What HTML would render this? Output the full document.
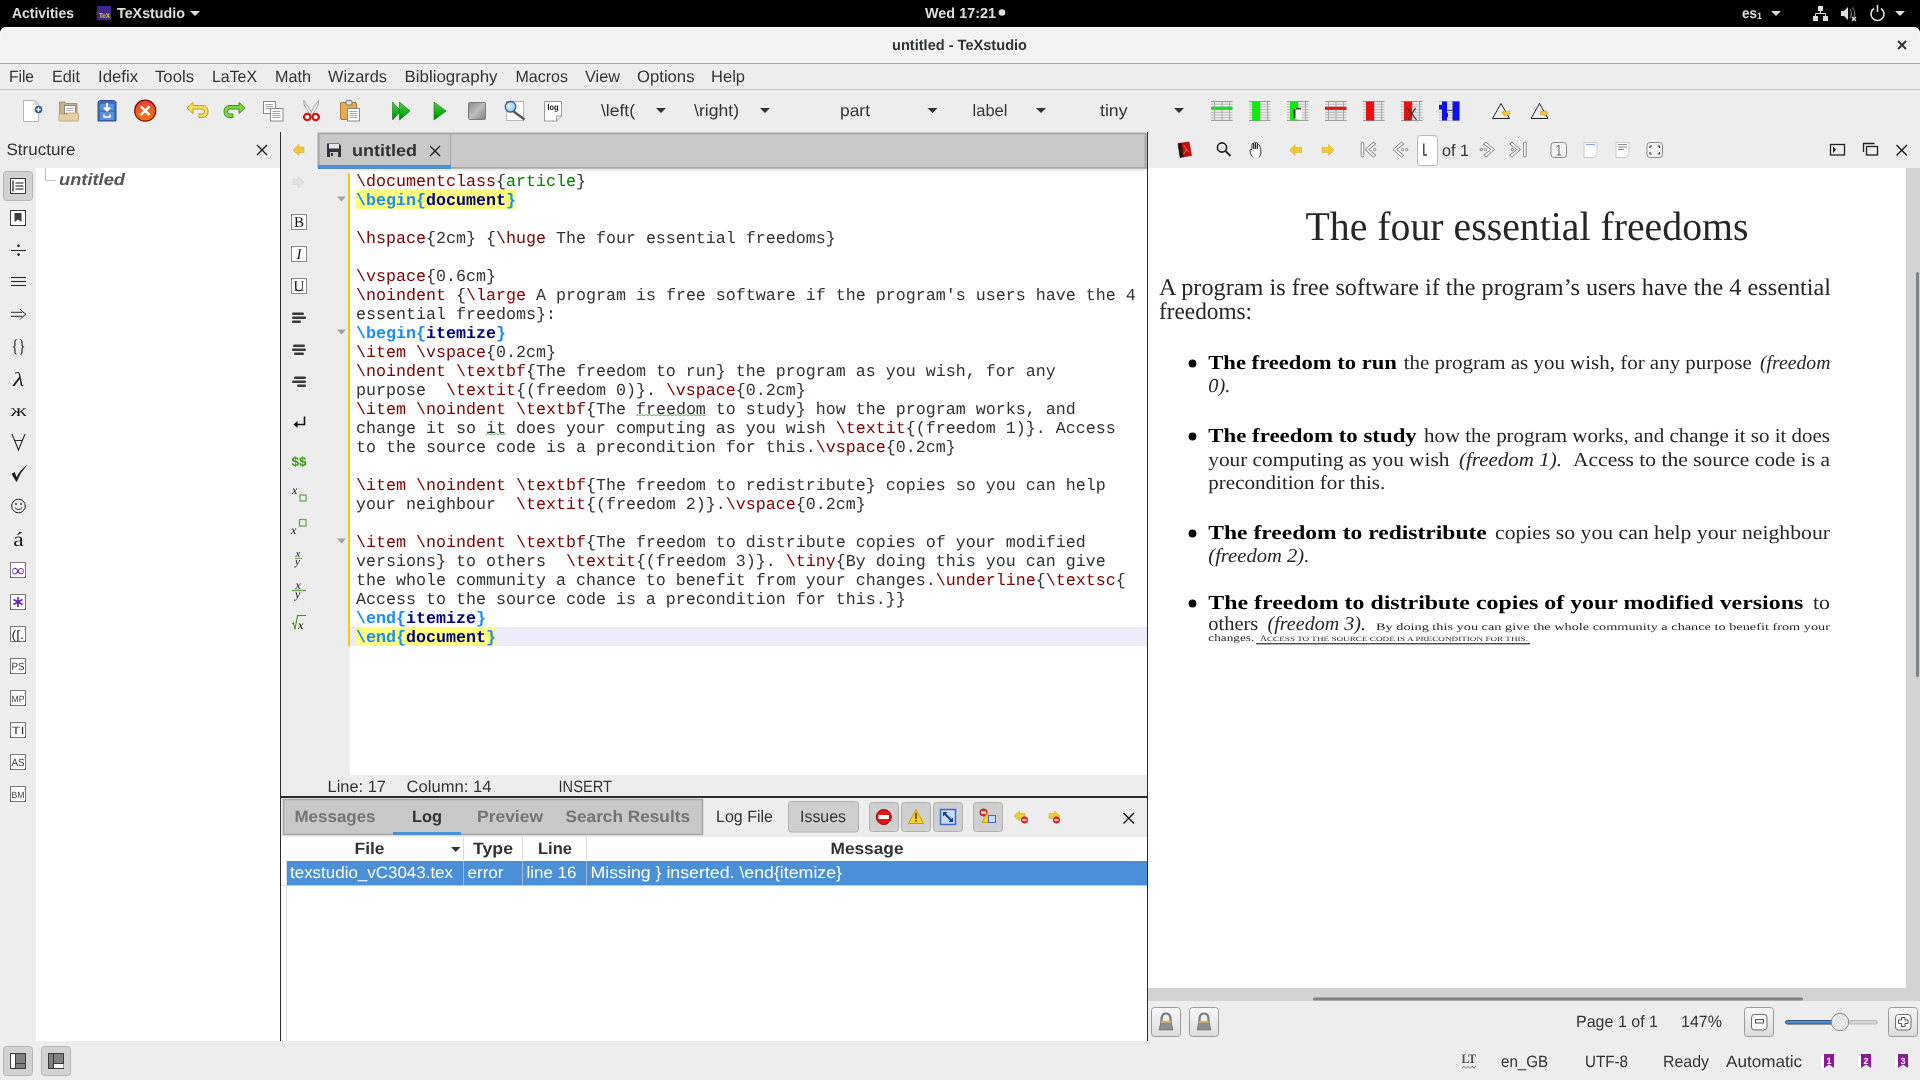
<!DOCTYPE html><html><head><meta charset="utf-8"><title>untitled - TeXstudio</title>
<style>html,body{margin:0;padding:0;width:1920px;height:1080px;overflow:hidden;background:#ededed;font-family:"Liberation Sans",sans-serif}svg{display:block;will-change:transform}</style></head><body>
<svg width="1920" height="1080" viewBox="0 0 1920 1080" text-rendering="geometricPrecision">
<rect x="0" y="0" width="1920" height="36" fill="#000000" />
<text x="12" y="18" font-family='"Liberation Sans", sans-serif' font-size="14.5" fill="#dedede" font-weight="bold" textLength="62" lengthAdjust="spacingAndGlyphs" >Activities</text>
<rect x="97" y="6" width="14" height="14" fill="#3b2a8c" rx="1" />
<text x="99" y="18" font-family='"Liberation Sans", sans-serif' font-size="7" fill="#f5d21f" font-weight="bold" textLength="11" lengthAdjust="spacingAndGlyphs" >TeX</text>
<text x="117" y="18" font-family='"Liberation Sans", sans-serif' font-size="14.5" fill="#dedede" font-weight="bold" textLength="68" lengthAdjust="spacingAndGlyphs" >TeXstudio</text>
<path d="M190 11 L200 11 L195 16 Z" fill="#dedede" />
<text x="925" y="18" font-family='"Liberation Sans", sans-serif' font-size="14.5" fill="#dedede" font-weight="bold" textLength="71" lengthAdjust="spacingAndGlyphs" >Wed 17:21</text>
<circle cx="1002" cy="12.5" r="3.3" fill="#dedede"/>
<text x="1742" y="18" font-family='"Liberation Sans", sans-serif' font-size="14.5" fill="#dedede" font-weight="bold" textLength="15" lengthAdjust="spacingAndGlyphs" >es</text>
<text x="1757" y="18.5" font-family='"Liberation Sans", sans-serif' font-size="9" fill="#dedede" font-weight="bold" textLength="5" lengthAdjust="spacingAndGlyphs" >1</text>
<path d="M1771 11 L1781 11 L1776 16 Z" fill="#dedede" />
<rect x="1818" y="6" width="5" height="5" fill="#dedede" />
<rect x="1813" y="16" width="5" height="5" fill="#dedede" />
<rect x="1823" y="16" width="5" height="5" fill="#dedede" />
<path d="M1820.5 11 V13.5 M1815.5 16 V13.5 H1825.5 V16" fill="none" stroke="#dedede" stroke-width="1" />
<path d="M1841 11 H1844 L1848 7 V20 L1844 16 H1841 Z" fill="#dedede" />
<path d="M1850 9 Q1853 13.5 1850 18 M1852.5 7.5 Q1857 13.5 1852.5 19.5" fill="none" stroke="#6a6a6a" stroke-width="1.2" />
<path d="M1852 17 L1856 21 M1856 17 L1852 21" fill="none" stroke="#dedede" stroke-width="1.4" />
<path d="M1874 8.5 A6.5 6.5 0 1 0 1881 8.5" fill="none" stroke="#dedede" stroke-width="1.6" />
<line x1="1877.5" y1="5" x2="1877.5" y2="12" stroke="#dedede" stroke-width="1.6" />
<path d="M1895 11 L1905 11 L1900 16 Z" fill="#dedede" />
<path d="M0 34 Q0 27 7 27 H1913 Q1920 27 1920 34 V63 H0 Z" fill="#f3f3f3" />
<path d="M0.5 34 Q0.5 27.5 7 27.5 H1913 Q1919.5 27.5 1919.5 34" fill="none" stroke="#ffffff" stroke-width="1" />
<text x="892" y="50" font-family='"Liberation Sans", sans-serif' font-size="14.8" fill="#2e3436" font-weight="bold" textLength="135" lengthAdjust="spacingAndGlyphs" >untitled - TeXstudio</text>
<path d="M1898 41 L1906 49 M1906 41 L1898 49" fill="none" stroke="#2e3436" stroke-width="2" />
<rect x="0" y="63" width="1920" height="1" fill="#a8a8a8" />
<rect x="0" y="64" width="1920" height="25" fill="#ededed" />
<text x="9" y="82" font-family='"Liberation Sans", sans-serif' font-size="16.5" fill="#2e3436" textLength="25" lengthAdjust="spacingAndGlyphs" >File</text>
<text x="52" y="82" font-family='"Liberation Sans", sans-serif' font-size="16.5" fill="#2e3436" textLength="28" lengthAdjust="spacingAndGlyphs" >Edit</text>
<text x="98" y="82" font-family='"Liberation Sans", sans-serif' font-size="16.5" fill="#2e3436" textLength="40" lengthAdjust="spacingAndGlyphs" >Idefix</text>
<text x="155" y="82" font-family='"Liberation Sans", sans-serif' font-size="16.5" fill="#2e3436" textLength="39" lengthAdjust="spacingAndGlyphs" >Tools</text>
<text x="212" y="82" font-family='"Liberation Sans", sans-serif' font-size="16.5" fill="#2e3436" textLength="45" lengthAdjust="spacingAndGlyphs" >LaTeX</text>
<text x="275" y="82" font-family='"Liberation Sans", sans-serif' font-size="16.5" fill="#2e3436" textLength="36" lengthAdjust="spacingAndGlyphs" >Math</text>
<text x="328" y="82" font-family='"Liberation Sans", sans-serif' font-size="16.5" fill="#2e3436" textLength="59" lengthAdjust="spacingAndGlyphs" >Wizards</text>
<text x="404.5" y="82" font-family='"Liberation Sans", sans-serif' font-size="16.5" fill="#2e3436" textLength="93" lengthAdjust="spacingAndGlyphs" >Bibliography</text>
<text x="515.5" y="82" font-family='"Liberation Sans", sans-serif' font-size="16.5" fill="#2e3436" textLength="52.5" lengthAdjust="spacingAndGlyphs" >Macros</text>
<text x="585" y="82" font-family='"Liberation Sans", sans-serif' font-size="16.5" fill="#2e3436" textLength="35" lengthAdjust="spacingAndGlyphs" >View</text>
<text x="637" y="82" font-family='"Liberation Sans", sans-serif' font-size="16.5" fill="#2e3436" textLength="57.5" lengthAdjust="spacingAndGlyphs" >Options</text>
<text x="711" y="82" font-family='"Liberation Sans", sans-serif' font-size="16.5" fill="#2e3436" textLength="34" lengthAdjust="spacingAndGlyphs" >Help</text>
<rect x="0" y="89" width="1920" height="1" fill="#c4c4c4" />
<rect x="0" y="90" width="1920" height="42" fill="#ededed" />
<text x="601" y="116" font-family='"Liberation Sans", sans-serif' font-size="16.5" fill="#2e3436" textLength="34" lengthAdjust="spacingAndGlyphs" >\left(</text>
<path d="M656 108 L666 108 L661.0 113 Z" fill="#2e3436" />
<text x="694" y="116" font-family='"Liberation Sans", sans-serif' font-size="16.5" fill="#2e3436" textLength="45" lengthAdjust="spacingAndGlyphs" >\right)</text>
<path d="M760 108 L770 108 L765.0 113 Z" fill="#2e3436" />
<text x="840" y="116" font-family='"Liberation Sans", sans-serif' font-size="16.5" fill="#2e3436" textLength="30" lengthAdjust="spacingAndGlyphs" >part</text>
<path d="M927.5 108 L937.5 108 L932.5 113 Z" fill="#2e3436" />
<text x="972.5" y="116" font-family='"Liberation Sans", sans-serif' font-size="16.5" fill="#2e3436" textLength="35" lengthAdjust="spacingAndGlyphs" >label</text>
<path d="M1036 108 L1046 108 L1041.0 113 Z" fill="#2e3436" />
<text x="1100" y="116" font-family='"Liberation Sans", sans-serif' font-size="16.5" fill="#2e3436" textLength="27.5" lengthAdjust="spacingAndGlyphs" >tiny</text>
<path d="M1174 108 L1184 108 L1179.0 113 Z" fill="#2e3436" />
<rect x="0" y="132" width="280" height="36" fill="#ededed" />
<text x="6.5" y="155" font-family='"Liberation Sans", sans-serif' font-size="16.5" fill="#2e3436" textLength="69" lengthAdjust="spacingAndGlyphs" >Structure</text>
<path d="M257 145 L267 155 M267 145 L257 155" fill="none" stroke="#1a1a1a" stroke-width="1.4" />
<rect x="36" y="168" width="244" height="873" fill="#ffffff" />
<path d="M45.5 168 V180.5 H56" fill="none" stroke="#c0c0c0" stroke-width="1" />
<text x="59" y="185" font-family='"Liberation Sans", sans-serif' font-size="16.5" fill="#555753" font-weight="bold" font-style="italic" textLength="66" lengthAdjust="spacingAndGlyphs" >untitled</text>
<rect x="3.5" y="171.5" width="29" height="29" fill="#d2d2d2" stroke="#b6b6b6" stroke-width="1" rx="3" />
<rect x="280" y="132" width="1" height="909" fill="#2b2b2b" />
<rect x="1147" y="132" width="1" height="909" fill="#2b2b2b" />
<rect x="281" y="132" width="866" height="643" fill="#ededed" />
<rect x="318" y="133" width="829" height="36" fill="#c8c8c8" />
<path d="M318.5 168 V133.5 H1145.5 V168" fill="none" stroke="#a6a6a6" stroke-width="2" />
<line x1="450.5" y1="135" x2="450.5" y2="165" stroke="#a6a6a6" stroke-width="1" />
<rect x="318" y="165" width="133" height="4" fill="#4a90d9" />
<rect x="451" y="167" width="696" height="1.5" fill="#a6a6a6" />
<text x="352" y="156" font-family='"Liberation Sans", sans-serif' font-size="16.5" fill="#2e3436" font-weight="bold" textLength="65" lengthAdjust="spacingAndGlyphs" >untitled</text>
<path d="M430 146 L440 156 M440 146 L430 156" fill="none" stroke="#1a1a1a" stroke-width="1.4" />
<rect x="350" y="171" width="797" height="604" fill="#ffffff" />
<rect x="348" y="173" width="2" height="473" fill="#f8c800" />
<rect x="350" y="627" width="797" height="19" fill="#ececfb" />
<rect x="356" y="190" width="160" height="19" fill="#ffff80" />
<rect x="356" y="627" width="140" height="19" fill="#ffff80" />
<text x="356" y="186" font-family='"Liberation Mono", monospace' font-size="16.67" fill="#2e3436" style="white-space:pre"><tspan fill="#800000">\documentclass</tspan><tspan>{</tspan><tspan fill="#008000">article</tspan><tspan>}</tspan></text>
<text x="356" y="205" font-family='"Liberation Mono", monospace' font-size="16.67" fill="#2e3436" style="white-space:pre"><tspan fill="#1a8ef5" font-weight="bold">\begin{</tspan><tspan fill="#000080" font-weight="bold">document</tspan><tspan fill="#1a8ef5" font-weight="bold">}</tspan></text>
<text x="356" y="243" font-family='"Liberation Mono", monospace' font-size="16.67" fill="#2e3436" style="white-space:pre"><tspan fill="#800000">\hspace</tspan><tspan>{2cm} {</tspan><tspan fill="#800000">\huge</tspan><tspan> The four essential freedoms}</tspan></text>
<text x="356" y="281" font-family='"Liberation Mono", monospace' font-size="16.67" fill="#2e3436" style="white-space:pre"><tspan fill="#800000">\vspace</tspan><tspan>{0.6cm}</tspan></text>
<text x="356" y="300" font-family='"Liberation Mono", monospace' font-size="16.67" fill="#2e3436" style="white-space:pre"><tspan fill="#800000">\noindent</tspan><tspan> {</tspan><tspan fill="#800000">\large</tspan><tspan> A program is free software if the program's users have the 4</tspan></text>
<text x="356" y="319" font-family='"Liberation Mono", monospace' font-size="16.67" fill="#2e3436" style="white-space:pre"><tspan>essential freedoms}:</tspan></text>
<text x="356" y="338" font-family='"Liberation Mono", monospace' font-size="16.67" fill="#2e3436" style="white-space:pre"><tspan fill="#1a8ef5" font-weight="bold">\begin{</tspan><tspan fill="#000080" font-weight="bold">itemize</tspan><tspan fill="#1a8ef5" font-weight="bold">}</tspan></text>
<text x="356" y="357" font-family='"Liberation Mono", monospace' font-size="16.67" fill="#2e3436" style="white-space:pre"><tspan fill="#800000">\item</tspan><tspan> </tspan><tspan fill="#800000">\vspace</tspan><tspan>{0.2cm}</tspan></text>
<text x="356" y="376" font-family='"Liberation Mono", monospace' font-size="16.67" fill="#2e3436" style="white-space:pre"><tspan fill="#800000">\noindent</tspan><tspan> </tspan><tspan fill="#800000">\textbf</tspan><tspan>{The freedom to run} the program as you wish, for any</tspan></text>
<text x="356" y="395" font-family='"Liberation Mono", monospace' font-size="16.67" fill="#2e3436" style="white-space:pre"><tspan>purpose  </tspan><tspan fill="#800000">\textit</tspan><tspan>{(freedom 0)}. </tspan><tspan fill="#800000">\vspace</tspan><tspan>{0.2cm}</tspan></text>
<text x="356" y="414" font-family='"Liberation Mono", monospace' font-size="16.67" fill="#2e3436" style="white-space:pre"><tspan fill="#800000">\item</tspan><tspan> </tspan><tspan fill="#800000">\noindent</tspan><tspan> </tspan><tspan fill="#800000">\textbf</tspan><tspan>{The freedom to study} how the program works, and</tspan></text>
<text x="356" y="433" font-family='"Liberation Mono", monospace' font-size="16.67" fill="#2e3436" style="white-space:pre"><tspan>change it so it does your computing as you wish </tspan><tspan fill="#800000">\textit</tspan><tspan>{(freedom 1)}. Access</tspan></text>
<text x="356" y="452" font-family='"Liberation Mono", monospace' font-size="16.67" fill="#2e3436" style="white-space:pre"><tspan>to the source code is a precondition for this.</tspan><tspan fill="#800000">\vspace</tspan><tspan>{0.2cm}</tspan></text>
<text x="356" y="490" font-family='"Liberation Mono", monospace' font-size="16.67" fill="#2e3436" style="white-space:pre"><tspan fill="#800000">\item</tspan><tspan> </tspan><tspan fill="#800000">\noindent</tspan><tspan> </tspan><tspan fill="#800000">\textbf</tspan><tspan>{The freedom to redistribute} copies so you can help</tspan></text>
<text x="356" y="509" font-family='"Liberation Mono", monospace' font-size="16.67" fill="#2e3436" style="white-space:pre"><tspan>your neighbour  </tspan><tspan fill="#800000">\textit</tspan><tspan>{(freedom 2)}.</tspan><tspan fill="#800000">\vspace</tspan><tspan>{0.2cm}</tspan></text>
<text x="356" y="547" font-family='"Liberation Mono", monospace' font-size="16.67" fill="#2e3436" style="white-space:pre"><tspan fill="#800000">\item</tspan><tspan> </tspan><tspan fill="#800000">\noindent</tspan><tspan> </tspan><tspan fill="#800000">\textbf</tspan><tspan>{The freedom to distribute copies of your modified</tspan></text>
<text x="356" y="566" font-family='"Liberation Mono", monospace' font-size="16.67" fill="#2e3436" style="white-space:pre"><tspan>versions} to others  </tspan><tspan fill="#800000">\textit</tspan><tspan>{(freedom 3)}. </tspan><tspan fill="#800000">\tiny</tspan><tspan>{By doing this you can give</tspan></text>
<text x="356" y="585" font-family='"Liberation Mono", monospace' font-size="16.67" fill="#2e3436" style="white-space:pre"><tspan>the whole community a chance to benefit from your changes.</tspan><tspan fill="#800000">\underline</tspan><tspan>{</tspan><tspan fill="#800000">\textsc</tspan><tspan>{</tspan></text>
<text x="356" y="604" font-family='"Liberation Mono", monospace' font-size="16.67" fill="#2e3436" style="white-space:pre"><tspan>Access to the source code is a precondition for this.}}</tspan></text>
<text x="356" y="623" font-family='"Liberation Mono", monospace' font-size="16.67" fill="#2e3436" style="white-space:pre"><tspan fill="#1a8ef5" font-weight="bold">\end{</tspan><tspan fill="#000080" font-weight="bold">itemize</tspan><tspan fill="#1a8ef5" font-weight="bold">}</tspan></text>
<text x="356" y="642" font-family='"Liberation Mono", monospace' font-size="16.67" fill="#2e3436" style="white-space:pre"><tspan fill="#1a8ef5" font-weight="bold">\end{</tspan><tspan fill="#000080" font-weight="bold">document</tspan><tspan fill="#1a8ef5" font-weight="bold">}</tspan></text>
<path d="M636 416 L638 414.5 L640 416 L642 414.5 L644 416 L646 414.5 L648 416 L650 414.5 L652 416 L654 414.5 L656 416 L658 414.5 L660 416 L662 414.5 L664 416 L666 414.5 L668 416 L670 414.5 L672 416 L674 414.5 L676 416 L678 414.5 L680 416 L682 414.5 L684 416 L686 414.5 L688 416 L690 414.5 L692 416 L694 414.5 L696 416 L698 414.5 L700 416 L702 414.5 L704 416 L706 414.5" fill="none" stroke="#3c9a3c" stroke-width="0.8" />
<path d="M486 435 L488 433.5 L490 435 L492 433.5 L494 435 L496 433.5 L498 435 L500 433.5 L502 435 L504 433.5 L506 435" fill="none" stroke="#3c9a3c" stroke-width="0.8" />
<path d="M337 196.5 L346 196.5 L341.5 201.5 Z" fill="#a0a0a0" />
<path d="M337 329.5 L346 329.5 L341.5 334.5 Z" fill="#a0a0a0" />
<path d="M337 538.5 L346 538.5 L341.5 543.5 Z" fill="#a0a0a0" />
<text x="327.5" y="792" font-family='"Liberation Sans", sans-serif' font-size="16.5" fill="#2e3436" textLength="58.5" lengthAdjust="spacingAndGlyphs" >Line: 17</text>
<text x="406.5" y="792" font-family='"Liberation Sans", sans-serif' font-size="16.5" fill="#2e3436" textLength="85" lengthAdjust="spacingAndGlyphs" >Column: 14</text>
<text x="558.5" y="792" font-family='"Liberation Sans", sans-serif' font-size="16.5" fill="#2e3436" textLength="53.5" lengthAdjust="spacingAndGlyphs" >INSERT</text>
<rect x="281" y="796" width="866" height="2" fill="#2b2b2b" />
<rect x="281" y="798" width="866" height="243" fill="#ededed" />
<rect x="283.5" y="799.5" width="419" height="35" fill="#c8c8c8" stroke="#a6a6a6" stroke-width="1.5" />
<text x="294.5" y="822" font-family='"Liberation Sans", sans-serif' font-size="16.5" fill="#6f7476" font-weight="bold" textLength="81" lengthAdjust="spacingAndGlyphs" >Messages</text>
<text x="412" y="822" font-family='"Liberation Sans", sans-serif' font-size="16.5" fill="#2e3436" font-weight="bold" textLength="30" lengthAdjust="spacingAndGlyphs" >Log</text>
<rect x="393" y="832" width="68" height="3" fill="#4a90d9" />
<text x="477" y="822" font-family='"Liberation Sans", sans-serif' font-size="16.5" fill="#6f7476" font-weight="bold" textLength="66" lengthAdjust="spacingAndGlyphs" >Preview</text>
<text x="565.5" y="822" font-family='"Liberation Sans", sans-serif' font-size="16.5" fill="#6f7476" font-weight="bold" textLength="124.5" lengthAdjust="spacingAndGlyphs" >Search Results</text>
<text x="716" y="822" font-family='"Liberation Sans", sans-serif' font-size="16.5" fill="#2e3436" textLength="57" lengthAdjust="spacingAndGlyphs" >Log File</text>
<rect x="788.5" y="801.5" width="70" height="30.5" fill="#cfcfcf" stroke="#b0b0b0" stroke-width="1" rx="3" />
<text x="800" y="822" font-family='"Liberation Sans", sans-serif' font-size="16.5" fill="#2e3436" textLength="46" lengthAdjust="spacingAndGlyphs" >Issues</text>
<rect x="869.5" y="802.5" width="29" height="29" fill="#cfcfcf" stroke="#b0b0b0" stroke-width="1" rx="3" />
<rect x="901.5" y="802.5" width="29" height="29" fill="#cfcfcf" stroke="#b0b0b0" stroke-width="1" rx="3" />
<rect x="933.5" y="802.5" width="29" height="29" fill="#cfcfcf" stroke="#b0b0b0" stroke-width="1" rx="3" />
<rect x="973.5" y="802.5" width="29" height="29" fill="#cfcfcf" stroke="#b0b0b0" stroke-width="1" rx="3" />
<path d="M1123.5 813 L1134 823.5 M1134 813 L1123.5 823.5" fill="none" stroke="#1a1a1a" stroke-width="1.4" />
<rect x="281" y="837" width="866" height="204" fill="#ffffff" />
<rect x="281" y="885" width="6" height="1" fill="#e0e0e0" />
<text x="354.5" y="854" font-family='"Liberation Sans", sans-serif' font-size="16.5" fill="#2e3436" font-weight="bold" textLength="30" lengthAdjust="spacingAndGlyphs" >File</text>
<path d="M451 847 L460.5 847 L455.75 852 Z" fill="#2e3436" />
<text x="473" y="854" font-family='"Liberation Sans", sans-serif' font-size="16.5" fill="#2e3436" font-weight="bold" textLength="40" lengthAdjust="spacingAndGlyphs" >Type</text>
<text x="538" y="854" font-family='"Liberation Sans", sans-serif' font-size="16.5" fill="#2e3436" font-weight="bold" textLength="34" lengthAdjust="spacingAndGlyphs" >Line</text>
<text x="830.5" y="854" font-family='"Liberation Sans", sans-serif' font-size="16.5" fill="#2e3436" font-weight="bold" textLength="73" lengthAdjust="spacingAndGlyphs" >Message</text>
<rect x="463" y="837" width="1" height="23" fill="#dcdcdc" />
<rect x="522" y="837" width="1" height="23" fill="#dcdcdc" />
<rect x="586" y="837" width="1" height="23" fill="#dcdcdc" />
<rect x="287" y="861" width="860" height="24" fill="#4a90d9" />
<rect x="463" y="861" width="1" height="24" fill="#a5b8cc" />
<rect x="522" y="861" width="1" height="24" fill="#a5b8cc" />
<rect x="586" y="861" width="1" height="24" fill="#a5b8cc" />
<rect x="287" y="885" width="860" height="1" fill="#c6c6c6" />
<rect x="286" y="861" width="1" height="180" fill="#dadada" />
<text x="290" y="877.5" font-family='"Liberation Sans", sans-serif' font-size="16.5" fill="#ffffff" textLength="163" lengthAdjust="spacingAndGlyphs" >texstudio_vC3043.tex</text>
<text x="467.5" y="877.5" font-family='"Liberation Sans", sans-serif' font-size="16.5" fill="#ffffff" textLength="36" lengthAdjust="spacingAndGlyphs" >error</text>
<text x="526.5" y="877.5" font-family='"Liberation Sans", sans-serif' font-size="16.5" fill="#ffffff" textLength="50" lengthAdjust="spacingAndGlyphs" >line 16</text>
<text x="590.5" y="877.5" font-family='"Liberation Sans", sans-serif' font-size="16.5" fill="#ffffff" textLength="251.5" lengthAdjust="spacingAndGlyphs" >Missing } inserted. \end{itemize}</text>
<rect x="1148" y="132" width="772" height="36" fill="#ededed" />
<rect x="1148" y="168" width="758" height="820" fill="#ffffff" />
<rect x="1906" y="168" width="14" height="833" fill="#d2d2d2" />
<rect x="1916" y="272" width="3" height="405" fill="#7e8284" rx="1.5" />
<rect x="1148" y="988" width="758" height="13" fill="#d2d2d2" />
<rect x="1313" y="997.5" width="490" height="3" fill="#7e8284" rx="1.5" />
<rect x="1148" y="1001" width="772" height="40" fill="#ededed" />
<rect x="1417.5" y="135.5" width="20" height="30" fill="#ffffff" stroke="#b8b8b8" stroke-width="1" rx="3" />
<path d="M1423.8 143.5 V155 H1427" fill="none" stroke="#2e3436" stroke-width="1.3" />
<text x="1442" y="156" font-family='"Liberation Sans", sans-serif' font-size="16.5" fill="#2e3436" textLength="27" lengthAdjust="spacingAndGlyphs" >of 1</text>
<path d="M1896.5 145 L1907 155.5 M1907 145 L1896.5 155.5" fill="none" stroke="#1a1a1a" stroke-width="1.4" />
<defs><linearGradient id="gb" x1="0" y1="0" x2="0" y2="1"><stop offset="0" stop-color="#f8f8f8"/><stop offset="1" stop-color="#dcdcdc"/></linearGradient></defs>
<rect x="1151.5" y="1007.5" width="29" height="29" fill="url(#gb)" stroke="#9a9a9a" stroke-width="1" rx="3" />
<defs><linearGradient id="gb" x1="0" y1="0" x2="0" y2="1"><stop offset="0" stop-color="#f8f8f8"/><stop offset="1" stop-color="#dcdcdc"/></linearGradient></defs>
<rect x="1189.5" y="1007.5" width="29" height="29" fill="url(#gb)" stroke="#9a9a9a" stroke-width="1" rx="3" />
<text x="1576" y="1027" font-family='"Liberation Sans", sans-serif' font-size="16.5" fill="#2e3436" textLength="82" lengthAdjust="spacingAndGlyphs" >Page 1 of 1</text>
<text x="1681" y="1027" font-family='"Liberation Sans", sans-serif' font-size="16.5" fill="#2e3436" textLength="41" lengthAdjust="spacingAndGlyphs" >147%</text>
<rect x="1744.5" y="1007.5" width="29" height="29" fill="url(#gb)" stroke="#9a9a9a" stroke-width="1" rx="3" />
<rect x="1888.5" y="1007.5" width="29" height="29" fill="url(#gb)" stroke="#9a9a9a" stroke-width="1" rx="3" />
<rect x="1785.5" y="1020.5" width="92" height="3.5" fill="#d4d4d4" stroke="#b0b0b0" stroke-width="0.8" rx="1.8" />
<rect x="1785.5" y="1020.5" width="55" height="3.5" fill="#4a90d9" stroke="#2a3a4a" stroke-width="0.8" rx="1.8" />
<circle cx="1840" cy="1022" r="8.7" fill="#e8e8e8" stroke="#8a8a8a" stroke-width="1"/>
<rect x="0" y="1041" width="1920" height="39" fill="#ededed" />
<rect x="3.5" y="1046.5" width="29" height="29" fill="#d2d2d2" stroke="#b6b6b6" stroke-width="1" rx="3" />
<rect x="41.5" y="1046.5" width="29" height="29" fill="#d2d2d2" stroke="#b6b6b6" stroke-width="1" rx="3" />
<text x="1461.5" y="1062.5" font-family='"Liberation Serif", serif' font-size="13" fill="#555555" font-weight="bold" textLength="14.5" lengthAdjust="spacingAndGlyphs" >LT</text>
<text x="1501" y="1067" font-family='"Liberation Sans", sans-serif' font-size="16.5" fill="#2e3436" textLength="47" lengthAdjust="spacingAndGlyphs" >en_GB</text>
<text x="1585" y="1067" font-family='"Liberation Sans", sans-serif' font-size="16.5" fill="#2e3436" textLength="43" lengthAdjust="spacingAndGlyphs" >UTF-8</text>
<text x="1663" y="1067" font-family='"Liberation Sans", sans-serif' font-size="16.5" fill="#2e3436" textLength="46" lengthAdjust="spacingAndGlyphs" >Ready</text>
<text x="1726" y="1067" font-family='"Liberation Sans", sans-serif' font-size="16.5" fill="#2e3436" textLength="76" lengthAdjust="spacingAndGlyphs" >Automatic</text>
<text x="1305.5" y="240" font-family='"Liberation Serif", serif' font-size="41" fill="#262626" textLength="443" lengthAdjust="spacingAndGlyphs" >The four essential freedoms</text>
<text x="1159" y="295.3" font-family='"Liberation Serif", serif' font-size="23.8" fill="#262626" textLength="672" lengthAdjust="spacingAndGlyphs" >A program is free software if the program’s users have the 4 essential</text>
<text x="1159" y="318.7" font-family='"Liberation Serif", serif' font-size="23.8" fill="#262626" textLength="93" lengthAdjust="spacingAndGlyphs" >freedoms:</text>
<circle cx="1192.5" cy="363.5" r="3.9" fill="#000000"/>
<text x="1208.3" y="369" font-family='"Liberation Serif", serif' font-size="19.8" fill="#000000" font-weight="bold" textLength="188.5" lengthAdjust="spacingAndGlyphs" >The freedom to run</text>
<text x="1403.7" y="369" font-family='"Liberation Serif", serif' font-size="19.8" fill="#262626" textLength="348" lengthAdjust="spacingAndGlyphs" >the program as you wish, for any purpose</text>
<text x="1760" y="369" font-family='"Liberation Serif", serif' font-size="19.8" fill="#262626" font-style="italic" textLength="70.5" lengthAdjust="spacingAndGlyphs" >(freedom</text>
<text x="1208.3" y="391.5" font-family='"Liberation Serif", serif' font-size="19.8" fill="#262626" font-style="italic" textLength="22" lengthAdjust="spacingAndGlyphs" >0).</text>
<circle cx="1192.5" cy="436.5" r="3.9" fill="#000000"/>
<text x="1208.3" y="442" font-family='"Liberation Serif", serif' font-size="19.8" fill="#000000" font-weight="bold" textLength="208.5" lengthAdjust="spacingAndGlyphs" >The freedom to study</text>
<text x="1424" y="442" font-family='"Liberation Serif", serif' font-size="19.8" fill="#262626" textLength="406" lengthAdjust="spacingAndGlyphs" >how the program works, and change it so it does</text>
<text x="1208.3" y="465.5" font-family='"Liberation Serif", serif' font-size="19.8" fill="#262626" textLength="241" lengthAdjust="spacingAndGlyphs" >your computing as you wish</text>
<text x="1459" y="465.5" font-family='"Liberation Serif", serif' font-size="19.8" fill="#262626" font-style="italic" textLength="103" lengthAdjust="spacingAndGlyphs" >(freedom 1).</text>
<text x="1573" y="465.5" font-family='"Liberation Serif", serif' font-size="19.8" fill="#262626" textLength="257" lengthAdjust="spacingAndGlyphs" >Access to the source code is a</text>
<text x="1208.3" y="489" font-family='"Liberation Serif", serif' font-size="19.8" fill="#262626" textLength="177" lengthAdjust="spacingAndGlyphs" >precondition for this.</text>
<circle cx="1192.5" cy="533.5" r="3.9" fill="#000000"/>
<text x="1208.3" y="539" font-family='"Liberation Serif", serif' font-size="19.8" fill="#000000" font-weight="bold" textLength="278.5" lengthAdjust="spacingAndGlyphs" >The freedom to redistribute</text>
<text x="1495" y="539" font-family='"Liberation Serif", serif' font-size="19.8" fill="#262626" textLength="335" lengthAdjust="spacingAndGlyphs" >copies so you can help your neighbour</text>
<text x="1208.3" y="561.6" font-family='"Liberation Serif", serif' font-size="19.8" fill="#262626" font-style="italic" textLength="101" lengthAdjust="spacingAndGlyphs" >(freedom 2).</text>
<circle cx="1192.5" cy="603.5" r="3.9" fill="#000000"/>
<text x="1208.3" y="609" font-family='"Liberation Serif", serif' font-size="19.8" fill="#000000" font-weight="bold" textLength="595" lengthAdjust="spacingAndGlyphs" >The freedom to distribute copies of your modified versions</text>
<text x="1813" y="609" font-family='"Liberation Serif", serif' font-size="19.8" fill="#262626" textLength="17" lengthAdjust="spacingAndGlyphs" >to</text>
<text x="1208.3" y="630" font-family='"Liberation Serif", serif' font-size="19.8" fill="#262626" textLength="50" lengthAdjust="spacingAndGlyphs" >others</text>
<text x="1267.5" y="630" font-family='"Liberation Serif", serif' font-size="19.8" fill="#262626" font-style="italic" textLength="98.5" lengthAdjust="spacingAndGlyphs" >(freedom 3).</text>
<text x="1376" y="630" font-family='"Liberation Serif", serif' font-size="10" fill="#262626" textLength="454" lengthAdjust="spacingAndGlyphs" >By doing this you can give the whole community a chance to benefit from your</text>
<text x="1208.3" y="640.5" font-family='"Liberation Serif", serif' font-size="10" fill="#262626" textLength="46" lengthAdjust="spacingAndGlyphs" >changes.</text>
<text x="1260" y="640.5" font-family='"Liberation Serif", serif' font-size="8.5" fill="#262626" textLength="7" lengthAdjust="spacingAndGlyphs" >A</text>
<text x="1267" y="640.5" font-family='"Liberation Serif", serif' font-size="6.6" fill="#262626" textLength="261" lengthAdjust="spacingAndGlyphs" >CCESS TO THE SOURCE CODE IS A PRECONDITION FOR THIS.</text>
<rect x="1256" y="643.3" width="274" height="1" fill="#000000" />
<defs><linearGradient id="gRed" x1="0" y1="0" x2="0" y2="1"><stop offset="0" stop-color="#e04040"/><stop offset="1" stop-color="#f08000"/></linearGradient><linearGradient id="gGreen" x1="0" y1="0" x2="0" y2="1"><stop offset="0" stop-color="#60c060"/><stop offset="0.6" stop-color="#10b010"/><stop offset="1" stop-color="#007a00"/></linearGradient><linearGradient id="gGray" x1="0" y1="0" x2="1" y2="1"><stop offset="0" stop-color="#8a8a8a"/><stop offset="0.5" stop-color="#bdbdbd"/><stop offset="1" stop-color="#808080"/></linearGradient><linearGradient id="gBlue" x1="0" y1="0" x2="0" y2="1"><stop offset="0" stop-color="#7ea8e8"/><stop offset="1" stop-color="#4a7fd0"/></linearGradient><radialGradient id="gLens" cx="0.4" cy="0.4" r="0.6"><stop offset="0" stop-color="#e8f6ff"/><stop offset="1" stop-color="#88c8f0"/></radialGradient></defs>
<path d="M23.5 100.5 H35 L38.5 104 V121.5 H23.5 Z" fill="#ffffff" stroke="#b8b8b0" stroke-width="1" />
<path d="M35 100.5 V104 H38.5" fill="none" stroke="#b8b8b0" stroke-width="1" />
<circle cx="38.5" cy="109.5" r="3.8" fill="#2a5aa8"/>
<path d="M36.2 109.5 H40.8 M38.5 107.2 V111.8" fill="none" stroke="#ffffff" stroke-width="1.3" />
<path d="M59.5 102 H65 L66.5 103.5 H77 V119 H59.5 Z" fill="#c8b08a" stroke="#a89068" stroke-width="1" />
<rect x="64.5" y="105.5" width="11" height="8" fill="#ffffff" stroke="#777" stroke-width="0.8" />
<line x1="66.5" y1="108.5" x2="73.5" y2="108.5" stroke="#999" stroke-width="0.8" />
<line x1="66.5" y1="110.5" x2="73.5" y2="110.5" stroke="#999" stroke-width="0.8" />
<path d="M59 114 H67 L68.5 113 H78.5 L78.5 120.5 Q78.5 121 78 121 H59.5 Q59 121 59 120.5 Z" fill="#e5cfa8" stroke="#c2a880" stroke-width="1" />
<path d="M98 102 L100 100.5 H114 L116 102 V121 H98 Z" fill="#3a6ec0" stroke="#2850a0" stroke-width="1" />
<rect x="100" y="104" width="14" height="6.5" fill="#5b8fd8" />
<rect x="100" y="112" width="14" height="8" fill="#5b8fd8" />
<path d="M107 103 V110 M104 107.5 L107 110.5 L110 107.5" fill="none" stroke="#ffffff" stroke-width="2" />
<path d="M104 114.5 V117 H110 V114.5" fill="none" stroke="#ffffff" stroke-width="1.5" />
<circle cx="145.2" cy="110.7" r="10.5" fill="url(#gRed)" stroke="#900000" stroke-width="1.2"/>
<path d="M140.8 106.3 L149.6 115.1 M149.6 106.3 L140.8 115.1" fill="none" stroke="#ffffff" stroke-width="2.4" />
<path d="M187 108 L193 102.5 V105.5 H202 Q208 105.5 208 111.5 Q208 117.5 202 117.5 H199 V114 H202 Q204.5 114 204.5 111.5 Q204.5 109 202 109 H193 V113.5 Z" fill="#f2e060" stroke="#c8a000" stroke-width="1" />
<path d="M245 108 L239 102.5 V105.5 H230 Q224 105.5 224 111.5 Q224 117.5 230 117.5 H233 V114 H230 Q227.5 114 227.5 111.5 Q227.5 109 230 109 H239 V113.5 Z" fill="#80d050" stroke="#3c9a10" stroke-width="1" />
<rect x="263.5" y="101.5" width="12" height="12" fill="#ffffff" stroke="#888" stroke-width="1" />
<line x1="265.5" y1="104.5" x2="273" y2="104.5" stroke="#999" stroke-width="0.9" />
<line x1="265.5" y1="106.5" x2="273" y2="106.5" stroke="#999" stroke-width="0.9" />
<line x1="265.5" y1="108.5" x2="273" y2="108.5" stroke="#999" stroke-width="0.9" />
<rect x="270.5" y="108.5" width="12.5" height="12.5" fill="#ffffff" stroke="#888" stroke-width="1" />
<line x1="272.5" y1="111.5" x2="280.5" y2="111.5" stroke="#999" stroke-width="0.9" />
<line x1="272.5" y1="113.5" x2="280.5" y2="113.5" stroke="#999" stroke-width="0.9" />
<line x1="272.5" y1="115.5" x2="280.5" y2="115.5" stroke="#999" stroke-width="0.9" />
<line x1="272.5" y1="117.5" x2="280.5" y2="117.5" stroke="#999" stroke-width="0.9" />
<path d="M303.8 100.5 Q303 106 310.5 114.5 L312 113.5 Q308 105 303.8 100.5 Z" fill="#f4f4f4" stroke="#8a8a8a" stroke-width="0.8" />
<path d="M318.7 100.5 Q319.5 106 312 114.5 L310.5 113.5 Q314.5 105 318.7 100.5 Z" fill="#f4f4f4" stroke="#8a8a8a" stroke-width="0.8" />
<circle cx="307.3" cy="117" r="3.2" fill="#ffffff" stroke="#d41818" stroke-width="2.3"/>
<circle cx="315.7" cy="117" r="3.2" fill="#ffffff" stroke="#d41818" stroke-width="2.3"/>
<rect x="340.5" y="102.5" width="16" height="17" fill="#e3aa58" stroke="#b07820" stroke-width="1" rx="1.5" />
<rect x="346" y="100.5" width="6" height="4.5" fill="#dddddd" stroke="#777" stroke-width="1" rx="1" />
<rect x="347.5" y="108.5" width="12" height="12.5" fill="#ffffff" stroke="#888" stroke-width="1" />
<line x1="349.5" y1="111.5" x2="357.5" y2="111.5" stroke="#999" stroke-width="0.9" />
<line x1="349.5" y1="113.5" x2="357.5" y2="113.5" stroke="#999" stroke-width="0.9" />
<line x1="349.5" y1="115.5" x2="357.5" y2="115.5" stroke="#999" stroke-width="0.9" />
<line x1="349.5" y1="117.5" x2="357.5" y2="117.5" stroke="#999" stroke-width="0.9" />
<path d="M392.5 102 L401 111 L392.5 120 Z" fill="url(#gGreen)" stroke="#0a7a0a" stroke-width="0.6" />
<path d="M399.5 102 L410 111 L399.5 120 Z" fill="url(#gGreen)" stroke="#0a7a0a" stroke-width="0.6" />
<path d="M434 102 L446.2 111 L434 120 Z" fill="url(#gGreen)" stroke="#0a7a0a" stroke-width="0.6" />
<rect x="468.5" y="102.5" width="17" height="17" fill="url(#gGray)" stroke="#7a7a7a" stroke-width="1" rx="1" />
<rect x="506.5" y="101.5" width="17" height="19" fill="#ffffff" stroke="#b8b8b8" stroke-width="1" />
<path d="M513 111 L524.5 119.5" fill="none" stroke="#555" stroke-width="2.2" />
<circle cx="510.5" cy="106.8" r="5.3" fill="url(#gLens)" stroke="#3a5a9a" stroke-width="1.3"/>
<path d="M544.5 101.5 H561.5 V116 L556.5 121 H544.5 Z" fill="#ffffff" stroke="#999" stroke-width="1" />
<path d="M556.5 121 V116 H561.5" fill="none" stroke="#999" stroke-width="1" />
<text x="547.5" y="109.5" font-family='"Liberation Sans", sans-serif' font-size="8.5" fill="#1a1a1a" font-weight="bold" textLength="11" lengthAdjust="spacingAndGlyphs" >log</text>
<line x1="1211" y1="101.5" x2="1232.5" y2="101.5" stroke="#8a8a8a" stroke-width="0.9" />
<line x1="1211" y1="104.2" x2="1232.5" y2="104.2" stroke="#b4b4b4" stroke-width="0.9" />
<line x1="1211" y1="106.9" x2="1232.5" y2="106.9" stroke="#b4b4b4" stroke-width="0.9" />
<line x1="1211" y1="109.6" x2="1232.5" y2="109.6" stroke="#b4b4b4" stroke-width="0.9" />
<line x1="1211" y1="112.3" x2="1232.5" y2="112.3" stroke="#b4b4b4" stroke-width="0.9" />
<line x1="1211" y1="115.0" x2="1232.5" y2="115.0" stroke="#b4b4b4" stroke-width="0.9" />
<line x1="1211" y1="117.7" x2="1232.5" y2="117.7" stroke="#b4b4b4" stroke-width="0.9" />
<line x1="1211" y1="120.4" x2="1232.5" y2="120.4" stroke="#8a8a8a" stroke-width="0.9" />
<line x1="1214.5" y1="101.5" x2="1214.5" y2="120.4" stroke="#a0a0a0" stroke-width="0.9" />
<line x1="1222" y1="101.5" x2="1222" y2="120.4" stroke="#a0a0a0" stroke-width="0.9" />
<line x1="1229.5" y1="101.5" x2="1229.5" y2="120.4" stroke="#a0a0a0" stroke-width="0.9" />
<rect x="1211" y="106.8" width="21.5" height="3" fill="#10e810" />
<line x1="1249" y1="101.5" x2="1270.5" y2="101.5" stroke="#8a8a8a" stroke-width="0.9" />
<line x1="1249" y1="104.2" x2="1270.5" y2="104.2" stroke="#b4b4b4" stroke-width="0.9" />
<line x1="1249" y1="106.9" x2="1270.5" y2="106.9" stroke="#b4b4b4" stroke-width="0.9" />
<line x1="1249" y1="109.6" x2="1270.5" y2="109.6" stroke="#b4b4b4" stroke-width="0.9" />
<line x1="1249" y1="112.3" x2="1270.5" y2="112.3" stroke="#b4b4b4" stroke-width="0.9" />
<line x1="1249" y1="115.0" x2="1270.5" y2="115.0" stroke="#b4b4b4" stroke-width="0.9" />
<line x1="1249" y1="117.7" x2="1270.5" y2="117.7" stroke="#b4b4b4" stroke-width="0.9" />
<line x1="1249" y1="120.4" x2="1270.5" y2="120.4" stroke="#8a8a8a" stroke-width="0.9" />
<line x1="1252.5" y1="101.5" x2="1252.5" y2="120.4" stroke="#a0a0a0" stroke-width="0.9" />
<line x1="1260" y1="101.5" x2="1260" y2="120.4" stroke="#a0a0a0" stroke-width="0.9" />
<line x1="1267.5" y1="101.5" x2="1267.5" y2="120.4" stroke="#a0a0a0" stroke-width="0.9" />
<rect x="1252" y="101.5" width="8" height="19" fill="#10e810" />
<line x1="1287" y1="101.5" x2="1308.5" y2="101.5" stroke="#8a8a8a" stroke-width="0.9" />
<line x1="1287" y1="104.2" x2="1308.5" y2="104.2" stroke="#b4b4b4" stroke-width="0.9" />
<line x1="1287" y1="106.9" x2="1308.5" y2="106.9" stroke="#b4b4b4" stroke-width="0.9" />
<line x1="1287" y1="109.6" x2="1308.5" y2="109.6" stroke="#b4b4b4" stroke-width="0.9" />
<line x1="1287" y1="112.3" x2="1308.5" y2="112.3" stroke="#b4b4b4" stroke-width="0.9" />
<line x1="1287" y1="115.0" x2="1308.5" y2="115.0" stroke="#b4b4b4" stroke-width="0.9" />
<line x1="1287" y1="117.7" x2="1308.5" y2="117.7" stroke="#b4b4b4" stroke-width="0.9" />
<line x1="1287" y1="120.4" x2="1308.5" y2="120.4" stroke="#8a8a8a" stroke-width="0.9" />
<line x1="1290.5" y1="101.5" x2="1290.5" y2="120.4" stroke="#a0a0a0" stroke-width="0.9" />
<line x1="1298" y1="101.5" x2="1298" y2="120.4" stroke="#a0a0a0" stroke-width="0.9" />
<line x1="1305.5" y1="101.5" x2="1305.5" y2="120.4" stroke="#a0a0a0" stroke-width="0.9" />
<rect x="1290" y="101.5" width="8" height="19" fill="#10e810" />
<rect x="1295" y="108.5" width="7" height="11" fill="#f8f8f8" />
<rect x="1293.5" y="109" width="2" height="9.5" fill="#333" />
<rect x="1296" y="108" width="5" height="1.5" fill="#444" />
<line x1="1325" y1="101.5" x2="1346.5" y2="101.5" stroke="#8a8a8a" stroke-width="0.9" />
<line x1="1325" y1="104.2" x2="1346.5" y2="104.2" stroke="#b4b4b4" stroke-width="0.9" />
<line x1="1325" y1="106.9" x2="1346.5" y2="106.9" stroke="#b4b4b4" stroke-width="0.9" />
<line x1="1325" y1="109.6" x2="1346.5" y2="109.6" stroke="#b4b4b4" stroke-width="0.9" />
<line x1="1325" y1="112.3" x2="1346.5" y2="112.3" stroke="#b4b4b4" stroke-width="0.9" />
<line x1="1325" y1="115.0" x2="1346.5" y2="115.0" stroke="#b4b4b4" stroke-width="0.9" />
<line x1="1325" y1="117.7" x2="1346.5" y2="117.7" stroke="#b4b4b4" stroke-width="0.9" />
<line x1="1325" y1="120.4" x2="1346.5" y2="120.4" stroke="#8a8a8a" stroke-width="0.9" />
<line x1="1328.5" y1="101.5" x2="1328.5" y2="120.4" stroke="#a0a0a0" stroke-width="0.9" />
<line x1="1336" y1="101.5" x2="1336" y2="120.4" stroke="#a0a0a0" stroke-width="0.9" />
<line x1="1343.5" y1="101.5" x2="1343.5" y2="120.4" stroke="#a0a0a0" stroke-width="0.9" />
<rect x="1325" y="106.8" width="21.5" height="3" fill="#e81010" />
<line x1="1363" y1="101.5" x2="1384.5" y2="101.5" stroke="#8a8a8a" stroke-width="0.9" />
<line x1="1363" y1="104.2" x2="1384.5" y2="104.2" stroke="#b4b4b4" stroke-width="0.9" />
<line x1="1363" y1="106.9" x2="1384.5" y2="106.9" stroke="#b4b4b4" stroke-width="0.9" />
<line x1="1363" y1="109.6" x2="1384.5" y2="109.6" stroke="#b4b4b4" stroke-width="0.9" />
<line x1="1363" y1="112.3" x2="1384.5" y2="112.3" stroke="#b4b4b4" stroke-width="0.9" />
<line x1="1363" y1="115.0" x2="1384.5" y2="115.0" stroke="#b4b4b4" stroke-width="0.9" />
<line x1="1363" y1="117.7" x2="1384.5" y2="117.7" stroke="#b4b4b4" stroke-width="0.9" />
<line x1="1363" y1="120.4" x2="1384.5" y2="120.4" stroke="#8a8a8a" stroke-width="0.9" />
<line x1="1366.5" y1="101.5" x2="1366.5" y2="120.4" stroke="#a0a0a0" stroke-width="0.9" />
<line x1="1374" y1="101.5" x2="1374" y2="120.4" stroke="#a0a0a0" stroke-width="0.9" />
<line x1="1381.5" y1="101.5" x2="1381.5" y2="120.4" stroke="#a0a0a0" stroke-width="0.9" />
<rect x="1366" y="101.5" width="8" height="19" fill="#e81010" />
<line x1="1401" y1="101.5" x2="1422.5" y2="101.5" stroke="#8a8a8a" stroke-width="0.9" />
<line x1="1401" y1="104.2" x2="1422.5" y2="104.2" stroke="#b4b4b4" stroke-width="0.9" />
<line x1="1401" y1="106.9" x2="1422.5" y2="106.9" stroke="#b4b4b4" stroke-width="0.9" />
<line x1="1401" y1="109.6" x2="1422.5" y2="109.6" stroke="#b4b4b4" stroke-width="0.9" />
<line x1="1401" y1="112.3" x2="1422.5" y2="112.3" stroke="#b4b4b4" stroke-width="0.9" />
<line x1="1401" y1="115.0" x2="1422.5" y2="115.0" stroke="#b4b4b4" stroke-width="0.9" />
<line x1="1401" y1="117.7" x2="1422.5" y2="117.7" stroke="#b4b4b4" stroke-width="0.9" />
<line x1="1401" y1="120.4" x2="1422.5" y2="120.4" stroke="#8a8a8a" stroke-width="0.9" />
<line x1="1404.5" y1="101.5" x2="1404.5" y2="120.4" stroke="#a0a0a0" stroke-width="0.9" />
<line x1="1412" y1="101.5" x2="1412" y2="120.4" stroke="#a0a0a0" stroke-width="0.9" />
<line x1="1419.5" y1="101.5" x2="1419.5" y2="120.4" stroke="#a0a0a0" stroke-width="0.9" />
<rect x="1404" y="101.5" width="8" height="19" fill="#e81010" />
<path d="M1407.5 108 L1416.5 120 M1415.5 108 L1408 120" fill="none" stroke="#333" stroke-width="1.2" />
<line x1="1439" y1="101.5" x2="1460" y2="101.5" stroke="#b4b4b4" stroke-width="0.9" />
<line x1="1439" y1="104.2" x2="1460" y2="104.2" stroke="#b4b4b4" stroke-width="0.9" />
<line x1="1439" y1="106.9" x2="1460" y2="106.9" stroke="#b4b4b4" stroke-width="0.9" />
<line x1="1439" y1="109.6" x2="1460" y2="109.6" stroke="#b4b4b4" stroke-width="0.9" />
<line x1="1439" y1="112.3" x2="1460" y2="112.3" stroke="#b4b4b4" stroke-width="0.9" />
<line x1="1439" y1="115.0" x2="1460" y2="115.0" stroke="#b4b4b4" stroke-width="0.9" />
<line x1="1439" y1="117.7" x2="1460" y2="117.7" stroke="#b4b4b4" stroke-width="0.9" />
<line x1="1439" y1="120.4" x2="1460" y2="120.4" stroke="#b4b4b4" stroke-width="0.9" />
<rect x="1442" y="101.5" width="5" height="19" fill="#1010e8" />
<rect x="1452.5" y="101.5" width="7" height="19" fill="#1010e8" />
<rect x="1439" y="105" width="5" height="4.5" fill="#1010e8" />
<rect x="1444" y="113" width="4" height="4" fill="#1010e8" />
<line x1="1447" y1="110.5" x2="1452.5" y2="110.5" stroke="#555" stroke-width="1" />
<path d="M1492.5 118.5 L1501 103.5 L1509.5 118.5 Z" fill="none" stroke="#222" stroke-width="1" />
<path d="M1502 112.5 L1505 110 V111.5 H1509.5 V115 H1505 V116.5 Z" fill="#f0c838" stroke="#c89810" stroke-width="0.5" />
<path d="M1531 118.5 L1539.5 103.5 L1548 118.5 Z" fill="none" stroke="#222" stroke-width="1" />
<path d="M1548 112.5 L1545 110 V111.5 H1540.5 V115 H1545 V116.5 Z" fill="#f0c838" stroke="#c89810" stroke-width="0.5" />
<rect x="10.5" y="178.5" width="15" height="15" fill="#ffffff" stroke="#3a3a3a" stroke-width="1" />
<line x1="13" y1="180.5" x2="13" y2="191.5" stroke="#2a2a2a" stroke-width="1.3" />
<line x1="15.5" y1="183" x2="23.5" y2="183" stroke="#2a2a2a" stroke-width="1.1" />
<line x1="15.5" y1="186" x2="23.5" y2="186" stroke="#2a2a2a" stroke-width="1.1" />
<line x1="15.5" y1="189" x2="23.5" y2="189" stroke="#2a2a2a" stroke-width="1.1" />
<rect x="10.5" y="210.5" width="15" height="15" fill="#ffffff" stroke="#3a3a3a" stroke-width="1" />
<path d="M14.5 213 H21.5 V222 L18 219.5 L14.5 222 Z" fill="#3c3c3c" />
<line x1="11" y1="250.5" x2="26" y2="250.5" stroke="#2a2a2a" stroke-width="1.1" />
<circle cx="18.5" cy="245.8" r="1.3" fill="#1a1a1a"/><circle cx="18.5" cy="254.6" r="1.3" fill="#1a1a1a"/>
<line x1="11" y1="277.5" x2="26" y2="277.5" stroke="#2a2a2a" stroke-width="1.1" />
<line x1="11" y1="281.5" x2="26" y2="281.5" stroke="#2a2a2a" stroke-width="1.1" />
<line x1="11" y1="285.5" x2="26" y2="285.5" stroke="#2a2a2a" stroke-width="1.1" />
<path d="M11 312.3 H22.5 M11 316.3 H22.5" fill="none" stroke="#2a2a2a" stroke-width="1" />
<path d="M20 309 Q23 312.5 26 314.3 Q23 316 20 319.5" fill="none" stroke="#2a2a2a" stroke-width="1" />
<text x="11.5" y="352" font-family='"Liberation Serif", serif' font-size="18" fill="#2a2a2a" textLength="14" lengthAdjust="spacingAndGlyphs" >{}</text>
<text x="13" y="385.5" font-family='"Liberation Serif", serif' font-size="20" fill="#1a1a1a" font-style="italic" textLength="11" lengthAdjust="spacingAndGlyphs" >λ</text>
<text x="10.5" y="415.5" font-family='"Liberation Serif", serif' font-size="17" fill="#1a1a1a" textLength="16" lengthAdjust="spacingAndGlyphs" >ж</text>
<path d="M12 434 L18.5 450 L25 434 M14.6 440.5 H22.4" fill="none" stroke="#2a2a2a" stroke-width="1.1" />
<path d="M12 474 L16.5 481.5 Q20 472 26.4 465.5 Q19.5 471 16.5 478 L14.5 472.5 Z" fill="#1a1a1a" stroke="#1a1a1a" stroke-width="0.8" />
<circle cx="18.5" cy="506" r="6.8" fill="none" stroke="#222" stroke-width="1"/>
<circle cx="16" cy="504" r="0.9" fill="#222"/><circle cx="21" cy="504" r="0.9" fill="#222"/>
<path d="M14.8 507.5 Q18.5 511.5 22.2 507.5" fill="none" stroke="#222" stroke-width="1" />
<text x="13.3" y="545.5" font-family='"Liberation Serif", serif' font-size="20" fill="#1a1a1a" textLength="10.5" lengthAdjust="spacingAndGlyphs" >á</text>
<rect x="10.5" y="562.5" width="15" height="15" fill="#ffffff" stroke="#777" stroke-width="1" />
<text x="11.5" y="575.5" font-family='"Liberation Serif", serif' font-size="17" fill="#6a1fb0" textLength="13" lengthAdjust="spacingAndGlyphs" >∞</text>
<rect x="10.5" y="594.5" width="15" height="15" fill="#ffffff" stroke="#777" stroke-width="1" />
<path d="M18 597 V607 M13.5 599.5 L22.5 604.5 M22.5 599.5 L13.5 604.5" fill="none" stroke="#6a1fb0" stroke-width="1.6" />
<rect x="10.5" y="626.5" width="15" height="15" fill="#ffffff" stroke="#777" stroke-width="1" />
<text x="11.5" y="639" font-family='"Liberation Sans", sans-serif' font-size="12" fill="#2a2a2a" textLength="12.5" lengthAdjust="spacingAndGlyphs" >([.</text>
<rect x="10.5" y="658.5" width="15" height="15" fill="#ffffff" stroke="#777" stroke-width="1" />
<text x="11.6" y="670.1" font-family='"Liberation Sans", sans-serif' font-size="10.5" fill="#3a3a3a" textLength="13" lengthAdjust="spacingAndGlyphs" >PS</text>
<rect x="10.5" y="690.5" width="15" height="15" fill="#ffffff" stroke="#777" stroke-width="1" />
<text x="11.6" y="702.1" font-family='"Liberation Sans", sans-serif' font-size="9" fill="#3a3a3a" textLength="13" lengthAdjust="spacingAndGlyphs" >MP</text>
<rect x="10.5" y="722.5" width="15" height="15" fill="#ffffff" stroke="#777" stroke-width="1" />
<text x="11.6" y="734.1" font-family='"Liberation Sans", sans-serif' font-size="10.5" fill="#3a3a3a" textLength="13" lengthAdjust="spacingAndGlyphs" >TI</text>
<rect x="10.5" y="754.5" width="15" height="15" fill="#ffffff" stroke="#777" stroke-width="1" />
<text x="11.6" y="766.1" font-family='"Liberation Sans", sans-serif' font-size="10.5" fill="#3a3a3a" textLength="13" lengthAdjust="spacingAndGlyphs" >AS</text>
<rect x="10.5" y="786.5" width="15" height="15" fill="#ffffff" stroke="#777" stroke-width="1" />
<text x="11.6" y="798.1" font-family='"Liberation Sans", sans-serif' font-size="9" fill="#3a3a3a" textLength="13" lengthAdjust="spacingAndGlyphs" >BM</text>
<rect x="291.5" y="214.5" width="15" height="15" fill="#ffffff" stroke="#8a8a8a" stroke-width="1" />
<text x="299" y="227.3" font-family='"Liberation Serif", serif' font-size="15" fill="#111" text-anchor="middle" >B</text>
<rect x="291.5" y="246.5" width="15" height="15" fill="#ffffff" stroke="#8a8a8a" stroke-width="1" />
<text x="299" y="259.3" font-family='"Liberation Serif", serif' font-size="15" fill="#111" font-style="italic" text-anchor="middle" >I</text>
<rect x="291.5" y="278.5" width="15" height="15" fill="#ffffff" stroke="#8a8a8a" stroke-width="1" />
<text x="299" y="291.3" font-family='"Liberation Serif", serif' font-size="15" fill="#111" text-anchor="middle" >U</text>
<line x1="294.5" y1="290.3" x2="303.5" y2="290.3" stroke="#111" stroke-width="0.8" />
<rect x="292" y="312.5" width="12" height="2.6" fill="#3a3a3a" rx="1.3" />
<rect x="292" y="316.5" width="14" height="2.6" fill="#3a3a3a" rx="1.3" />
<rect x="292" y="320.5" width="9" height="2.6" fill="#3a3a3a" rx="1.3" />
<rect x="293.0" y="344.5" width="12" height="2.6" fill="#3a3a3a" rx="1.3" />
<rect x="292.0" y="348.5" width="14" height="2.6" fill="#3a3a3a" rx="1.3" />
<rect x="294.0" y="352.5" width="10" height="2.6" fill="#3a3a3a" rx="1.3" />
<rect x="294" y="376.5" width="12" height="2.6" fill="#3a3a3a" rx="1.3" />
<rect x="292" y="380.5" width="14" height="2.6" fill="#3a3a3a" rx="1.3" />
<rect x="297" y="384.5" width="9" height="2.6" fill="#3a3a3a" rx="1.3" />
<path d="M304.5 416.5 V424.5 H296" fill="none" stroke="#111" stroke-width="1.6" />
<path d="M293.5 424.5 L297.5 421 V428 Z" fill="#111" />
<text x="291.5" y="466" font-family='"Liberation Sans", sans-serif' font-size="13" fill="#3a9a10" font-weight="bold" textLength="15" lengthAdjust="spacingAndGlyphs" >$$</text>
<text x="292" y="493.5" font-family='"Liberation Serif", serif' font-size="12" fill="#111" font-style="italic" >x</text>
<rect x="300" y="495" width="6" height="6" fill="none" stroke="#5aaa40" stroke-width="1.2" />
<rect x="299.5" y="519.5" width="6.5" height="6.5" fill="none" stroke="#5aaa40" stroke-width="1.2" />
<text x="291" y="533.5" font-family='"Liberation Serif", serif' font-size="12" fill="#111" font-style="italic" >x</text>
<text x="295.5" y="557" font-family='"Liberation Serif", serif' font-size="11" fill="#111" font-style="italic" >x</text>
<line x1="295" y1="558.5" x2="302" y2="558.5" stroke="#5aaa40" stroke-width="1" />
<text x="295" y="564.5" font-family='"Liberation Serif", serif' font-size="11" fill="#111" font-style="italic" >y</text>
<text x="295.5" y="588.5" font-family='"Liberation Serif", serif' font-size="12" fill="#111" font-style="italic" >x</text>
<line x1="292" y1="590.5" x2="306" y2="590.5" stroke="#5aaa40" stroke-width="1.4" />
<text x="295" y="597.5" font-family='"Liberation Serif", serif' font-size="12" fill="#111" font-style="italic" >y</text>
<path d="M292 624 L293.5 623 L295 629.5 L297.5 615.5 H306" fill="none" stroke="#3a9a10" stroke-width="1.1" />
<text x="298" y="628.5" font-family='"Liberation Serif", serif' font-size="12" fill="#111" font-style="italic" >x</text>
<path d="M293 150 L299 144.5 V147.5 H304 V152.5 H299 V155.5 Z" fill="#f0c838" stroke="#d4a820" stroke-width="0.6" />
<path d="M304 182 L298 176.5 V179.5 H293 V184.5 H298 V187.5 Z" fill="#e2e2e2" stroke="#d0d0d0" stroke-width="0.6" />
<path d="M327 143.5 H339 L341 145.5 V157 H327 Z" fill="#333" />
<rect x="329" y="144" width="10" height="4.5" fill="#dde8f0" />
<rect x="330" y="152" width="8" height="5" fill="#c8c8c8" />
<rect x="331" y="153" width="2" height="3" fill="#333" />
<circle cx="883.8" cy="817" r="7.5" fill="#e01818" stroke="#a00000" stroke-width="1"/>
<rect x="878.5" y="815" width="10.5" height="4" fill="#ffffff" />
<path d="M916 809.5 L923.5 823.5 H908.5 Z" fill="#f8d020" stroke="#c89800" stroke-width="1" />
<rect x="915.2" y="813" width="1.6" height="6" fill="#553300" />
<rect x="915.2" y="820" width="1.6" height="1.6" fill="#553300" />
<rect x="940.5" y="809.5" width="15" height="15" fill="#c8dcf8" stroke="#3a6ad0" stroke-width="1.5" />
<path d="M943.5 812.5 L952.5 821.5" fill="none" stroke="#1a3a8a" stroke-width="2" />
<path d="M943 812 H947.5 L943 816.5 Z M953 822 H948.5 L953 817.5 Z" fill="#1a3a8a" />
<circle cx="983.5" cy="812.5" r="3.6" fill="#e83030" stroke="#a01010" stroke-width="0.8"/>
<rect x="981" y="811.5" width="5" height="2" fill="#ffffff" />
<path d="M987 813 L992 822.5 H982 Z" fill="#f8d020" stroke="#c89800" stroke-width="0.8" />
<rect x="988.5" y="815.5" width="7" height="7" fill="#c8dcf8" stroke="#3a6ad0" stroke-width="1" />
<path d="M1014 816 L1019.5 811 V813.5 H1025 V818.5 H1019.5 V821 Z" fill="#f0c838" stroke="#d4a820" stroke-width="0.6" />
<circle cx="1024.5" cy="820" r="3.2" fill="#e82828" stroke="#b01010" stroke-width="0.6"/>
<rect x="1022.5" y="819.3" width="4" height="1.4" fill="#ffffff" />
<path d="M1060 816 L1054.5 811 V813.5 H1049 V818.5 H1054.5 V821 Z" fill="#f0c838" stroke="#d4a820" stroke-width="0.6" />
<circle cx="1056.5" cy="820" r="3.2" fill="#e82828" stroke="#b01010" stroke-width="0.6"/>
<rect x="1054.5" y="819.3" width="4" height="1.4" fill="#ffffff" />
<path d="M1178 143.5 L1189 142 L1191.5 155.5 L1180 157.5 Z" fill="#cc0a0a" stroke="#8a0000" stroke-width="0.6" />
<path d="M1178 143.5 L1181.5 143 L1183.5 157 L1180 157.5 Z" fill="#1a1a1a" />
<path d="M1184 145.5 L1186.5 150 L1183.5 154 M1186.5 150 L1189.5 152" fill="none" stroke="#f2b0b0" stroke-width="0.6" />
<circle cx="1222" cy="147.5" r="4.6" fill="none" stroke="#222" stroke-width="1.6"/>
<line x1="1225.5" y1="151" x2="1230.5" y2="156" stroke="#222" stroke-width="1.8" />
<path d="M1252.5 157 Q1250 153.5 1250 150.5 Q1250.5 148.5 1252 149.5 V144 Q1252.8 142.5 1253.8 144 V149 V142.8 Q1254.7 141.5 1255.6 142.8 V149 V143.2 Q1256.5 142 1257.4 143.2 V149 V145 Q1258.3 143.8 1259.3 145 Q1261 148 1261 153 Q1260.5 156 1259 157.5" fill="#ffffff" stroke="#222" stroke-width="0.9" />
<path d="M1289.5 150 L1295 144.5 V147.5 H1301.5 V152.5 H1295 V155.5 Z" fill="#f0c838" stroke="#e0b020" stroke-width="0.6" />
<path d="M1334 150 L1328.5 144.5 V147.5 H1322 V152.5 H1328.5 V155.5 Z" fill="#f0c838" stroke="#e0b020" stroke-width="0.6" />
<rect x="1361.2" y="142.2" width="2.6" height="14.8" fill="#fbfbfb" stroke="#6e6e6e" stroke-width="0.8" rx="1.3" />
<path d="M1373.50 142.10 L1365.00 149.60 L1373.50 157.10 L1375.80 155.20 L1368.60 149.60 L1375.80 144.00 Z" fill="#fbfbfb" stroke="#6e6e6e" stroke-width="0.9" stroke-linejoin="round"/>
<circle cx="1374.6" cy="149.6" r="1.2" fill="#fbfbfb" stroke="#6e6e6e" stroke-width="0.8"/>
<path d="M1401.50 142.10 L1393.00 149.60 L1401.50 157.10 L1403.80 155.20 L1396.60 149.60 L1403.80 144.00 Z" fill="#fbfbfb" stroke="#6e6e6e" stroke-width="0.9" stroke-linejoin="round"/>
<circle cx="1402.6" cy="149.6" r="1.2" fill="#fbfbfb" stroke="#6e6e6e" stroke-width="0.8"/>
<circle cx="1406.6" cy="149.6" r="1.2" fill="#fbfbfb" stroke="#6e6e6e" stroke-width="0.8"/>
<path d="M1486.00 142.10 L1494.50 149.60 L1486.00 157.10 L1483.70 155.20 L1490.90 149.60 L1483.70 144.00 Z" fill="#fbfbfb" stroke="#6e6e6e" stroke-width="0.9" stroke-linejoin="round"/>
<circle cx="1481.3" cy="149.6" r="1.2" fill="#fbfbfb" stroke="#6e6e6e" stroke-width="0.8"/>
<circle cx="1485.3" cy="149.6" r="1.2" fill="#fbfbfb" stroke="#6e6e6e" stroke-width="0.8"/>
<path d="M1512.00 142.10 L1520.50 149.60 L1512.00 157.10 L1509.70 155.20 L1516.90 149.60 L1509.70 144.00 Z" fill="#fbfbfb" stroke="#6e6e6e" stroke-width="0.9" stroke-linejoin="round"/>
<circle cx="1512.3" cy="149.6" r="1.2" fill="#fbfbfb" stroke="#6e6e6e" stroke-width="0.8"/>
<rect x="1523.6" y="142.2" width="2.6" height="14.8" fill="#fbfbfb" stroke="#6e6e6e" stroke-width="0.8" rx="1.3" />
<rect x="1551" y="142.5" width="15.5" height="15" fill="#f4f4f4" stroke="#888" stroke-width="1" rx="3" />
<path d="M1556.5 147 L1559 145 V155 M1556.5 155 H1561" fill="none" stroke="#666" stroke-width="1" />
<path d="M1584 142.5 H1597 V154 L1594 157.5 H1584 Z" fill="#ffffff" stroke="#c0c0c0" stroke-width="0.8" />
<path d="M1616 142.5 H1629 V154 L1626 157.5 H1616 Z" fill="#ffffff" stroke="#c0c0c0" stroke-width="0.8" />
<path d="M1586 144.5 H1595" fill="none" stroke="#7aa8e8" stroke-width="1.2" />
<path d="M1618 144.5 H1627 M1618 147 H1627 M1618 149.5 H1624" fill="none" stroke="#8a8a8a" stroke-width="1" />
<rect x="1647" y="142.5" width="15.5" height="15" fill="#f4f4f4" stroke="#888" stroke-width="1" rx="3" />
<path d="M1650 148 V146 H1652 M1657.5 146 H1659.5 V148 M1650 152 V154 H1652 M1657.5 154 H1659.5 V152" fill="none" stroke="#444" stroke-width="1.2" />
<rect x="1830.5" y="144.5" width="14" height="10.5" fill="none" stroke="#222" stroke-width="1.3" />
<path d="M1833 146.5 V153 L1836 149.75 Z" fill="#222" />
<rect x="1866.5" y="146.5" width="11" height="8.5" fill="none" stroke="#222" stroke-width="1.3" />
<path d="M1863.5 152 V143.5 H1874.5" fill="none" stroke="#222" stroke-width="1.3" />
<path d="M1161.5 1025 V1019.5 Q1161.5 1013.5 1166 1013.5 Q1170.5 1013.5 1170.5 1019.5 V1025" fill="none" stroke="#7a7a7a" stroke-width="2.2" />
<path d="M1159 1030 L1161 1021.5 H1171 L1173 1030 Z" fill="#8c8c8c" stroke="#666" stroke-width="0.6" />
<rect x="1161" y="1021" width="10" height="1.8" fill="#d8b060" />
<path d="M1199.5 1025 V1019.5 Q1199.5 1013.5 1204 1013.5 Q1208.5 1013.5 1208.5 1019.5 V1025" fill="none" stroke="#7a7a7a" stroke-width="2.2" />
<path d="M1197 1030 L1199 1021.5 H1209 L1211 1030 Z" fill="#8c8c8c" stroke="#666" stroke-width="0.6" />
<rect x="1199" y="1021" width="10" height="1.8" fill="#d8b060" />
<rect x="1751.5" y="1014.5" width="15.5" height="15.5" fill="#fafafa" stroke="#6a6a6a" stroke-width="1" rx="3" />
<rect x="1755.5" y="1019.5" width="8" height="3.5" fill="#ffffff" stroke="#555" stroke-width="1" />
<rect x="1895.5" y="1014.5" width="15.5" height="15.5" fill="#fafafa" stroke="#6a6a6a" stroke-width="1" rx="3" />
<path d="M1901.5 1017.5 H1905 V1020 H1908 V1023.5 H1905 V1026.5 H1901.5 V1023.5 H1898.5 V1020 H1901.5 Z" fill="#ffffff" stroke="#555" stroke-width="1" />
<rect x="10.5" y="1053.5" width="15" height="15" fill="#808080" stroke="#3a3a3a" stroke-width="1" />
<rect x="11" y="1054" width="4" height="14" fill="#ffffff" />
<line x1="15.5" y1="1054" x2="15.5" y2="1068" stroke="#3a3a3a" stroke-width="1" />
<line x1="16" y1="1063.5" x2="25.5" y2="1063.5" stroke="#3a3a3a" stroke-width="1" />
<rect x="48.5" y="1053.5" width="15" height="15" fill="#808080" stroke="#3a3a3a" stroke-width="1" />
<line x1="53.5" y1="1054" x2="53.5" y2="1068" stroke="#3a3a3a" stroke-width="1" />
<rect x="54" y="1064" width="9.5" height="4" fill="#ffffff" />
<line x1="54" y1="1063.5" x2="63.5" y2="1063.5" stroke="#3a3a3a" stroke-width="1" />
<path d="M1462 1068.5 L1464 1066 L1466 1068.5 L1468 1066 L1470 1068.5 L1472 1066 L1474 1068.5 L1476 1066" fill="none" stroke="#777" stroke-width="0.9" />
<path d="M1824 1054 H1834 V1068 L1829 1064.5 L1824 1068 Z" fill="#8a1a9a" />
<rect x="1821" y="1056" width="3" height="11" fill="#ffffff" />
<text x="1829" y="1063.5" font-family='"Liberation Sans", sans-serif' font-size="9" fill="#ffffff" font-weight="bold" text-anchor="middle" >1</text>
<path d="M1861 1054 H1871 V1068 L1866 1064.5 L1861 1068 Z" fill="#8a1a9a" />
<rect x="1858" y="1056" width="3" height="11" fill="#ffffff" />
<text x="1866" y="1063.5" font-family='"Liberation Sans", sans-serif' font-size="9" fill="#ffffff" font-weight="bold" text-anchor="middle" >2</text>
<path d="M1898 1054 H1908 V1068 L1903 1064.5 L1898 1068 Z" fill="#8a1a9a" />
<rect x="1895" y="1056" width="3" height="11" fill="#ffffff" />
<text x="1903" y="1063.5" font-family='"Liberation Sans", sans-serif' font-size="9" fill="#ffffff" font-weight="bold" text-anchor="middle" >3</text>
</svg></body></html>
